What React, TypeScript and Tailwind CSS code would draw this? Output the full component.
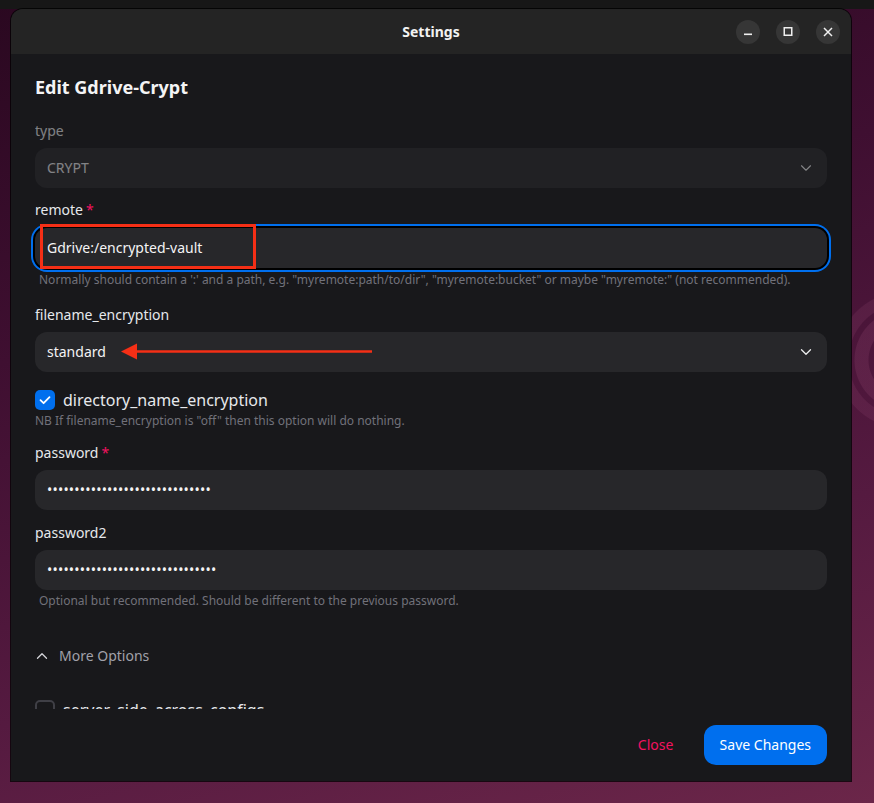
import React from "react";
import { ChevronDown, ChevronUp } from "lucide-react";

function Label({ children, required }: { children: React.ReactNode; required?: boolean }) {
  return (
    <div className="h-5 text-sm leading-5 text-[#e6e8ec]">
      {children}
      {required && <span className="ml-[3px] text-[#f31260]">*</span>}
    </div>
  );
}

function WinButton({ children }: { children: React.ReactNode }) {
  return (
    <div className="flex h-6 w-6 items-center justify-center rounded-full bg-[#363636] text-[#efefef]">
      {children}
    </div>
  );
}

export default function App() {
  const dots1 = "•".repeat(30);
  const dots2 = "•".repeat(31);
  return (
    <div className="relative flex h-[803px] w-[874px] flex-col overflow-hidden bg-[radial-gradient(circle_at_905px_360px,transparent_0_36px,rgba(130,60,100,0.3)_37px_50px,transparent_51px_56px,rgba(130,60,100,0.25)_57px_68px,transparent_69px),linear-gradient(165deg,#2a0820_0%,#3f0f31_35%,#551a40_70%,#6b2649_100%)] font-['Noto_Sans',sans-serif]">
      {/* top panel */}
      <div className="h-[9px] w-full bg-[#171717]" />

      <div className="flex pl-[11px]">
        {/* window */}
        <div className="flex h-[772px] w-[840px] flex-col overflow-hidden rounded-t-[12px] bg-[#18181b] shadow-[0_0_0_1px_rgba(0,0,0,0.75)]">
          {/* title bar */}
          <div className="grid h-[45px] shrink-0 grid-cols-[1fr_auto_1fr] items-center bg-[#242424]">
            <div />
            <div className="text-sm font-bold text-[#f2f2f2]">Settings</div>
            <div className="flex justify-end gap-4 pr-[11px]">
              <WinButton>
                <svg width="24" height="24" viewBox="0 0 24 24">
                  <rect x="8" y="13.5" width="8" height="1.6" fill="currentColor" />
                </svg>
              </WinButton>
              <WinButton>
                <svg width="24" height="24" viewBox="0 0 24 24">
                  <rect x="8.25" y="7.75" width="7.5" height="7.5" fill="none" stroke="currentColor" strokeWidth="1.5" />
                </svg>
              </WinButton>
              <WinButton>
                <svg width="24" height="24" viewBox="0 0 24 24">
                  <path d="M8 8 L16 16 M16 8 L8 16" stroke="currentColor" strokeWidth="1.5" />
                </svg>
              </WinButton>
            </div>
          </div>

          {/* scroll area */}
          <div className="h-[655px] shrink-0 overflow-hidden px-6">
            <div className="mt-[19px] text-lg font-bold leading-7 text-[#f4f4f5]">Edit Gdrive-Crypt</div>

            {/* type */}
            <div className="mt-5 flex flex-col gap-[7px] opacity-50">
              <Label>type</Label>
              <div className="flex h-10 items-center justify-between rounded-xl bg-[#2a2a2e] pl-3 pr-3 text-sm text-[#ecedee]">
                <span>CRYPT</span>
                <ChevronDown size={18} strokeWidth={1.5} />
              </div>
            </div>

            {/* remote */}
            <div className="mt-3 flex flex-col gap-2">
              <Label required>remote</Label>
              <div className="flex h-10 items-center rounded-xl bg-[#27272a] px-3 text-sm text-[#f4f4f5] ring-2 ring-[#006fee] ring-offset-2 ring-offset-black">
                Gdrive:/encrypted-vault
              </div>
            </div>
            <div className="px-1 py-1 text-xs leading-4 text-[#71717a]">
              Normally should contain a ':' and a path, e.g. "myremote:path/to/dir", "myremote:bucket" or maybe "myremote:" (not recommended).
            </div>

            {/* filename_encryption */}
            <div className="mt-[13px] flex flex-col gap-[7px]">
              <Label>filename_encryption</Label>
              <div className="flex h-10 items-center justify-between rounded-xl bg-[#27272a] px-3 text-sm text-[#f4f4f5]">
                <span>standard</span>
                <ChevronDown size={18} strokeWidth={1.75} className="text-[#ecedee]" />
              </div>
            </div>

            {/* directory_name_encryption */}
            <div className="mt-4 flex h-6 items-center gap-2">
              <div className="flex h-5 w-5 items-center justify-center rounded-[5px] bg-[#006fee]">
                <svg width="20" height="20" viewBox="0 0 20 20">
                  <polyline points="5.5,10.2 8.6,13.2 14.5,7.2" fill="none" stroke="white" strokeWidth="1.8" strokeLinecap="round" strokeLinejoin="round" />
                </svg>
              </div>
              <span className="text-base leading-6 text-[#e6e8ec]">directory_name_encryption</span>
            </div>
            <div className="mt-px text-xs leading-4 text-[#71717a]">
              NB If filename_encryption is "off" then this option will do nothing.
            </div>

            {/* password */}
            <div className="mt-[14px] flex flex-col gap-[7px]">
              <Label required>password</Label>
              <div className="flex h-10 items-center rounded-xl bg-[#27272a] px-3 text-sm tracking-[0.2px] text-[#f4f4f5]">
                {dots1}
              </div>
            </div>

            {/* password2 */}
            <div className="mt-[13px] flex flex-col gap-[7px]">
              <Label>password2</Label>
              <div className="flex h-10 items-center rounded-xl bg-[#27272a] px-3 text-sm tracking-[0.2px] text-[#f4f4f5]">
                {dots2}
              </div>
            </div>
            <div className="mt-[3px] px-1 text-xs leading-4 text-[#71717a]">
              Optional but recommended. Should be different to the previous password.
            </div>

            {/* More options */}
            <div className="mt-[37px] flex h-5 items-center gap-2 text-sm text-[#a1a1aa]">
              <ChevronUp size={18} strokeWidth={1.75} className="-ml-[2px] text-[#d4d4d8]" />
              <span>More Options</span>
            </div>

            <div className="mt-8 flex h-6 items-center gap-2">
              <div className="h-5 w-5 rounded-[5px] border-2 border-[#3f3f46]" />
              <span className="text-base leading-6 text-[#e6e8ec]">server_side_across_configs</span>
            </div>
          </div>

          {/* footer */}
          <div className="flex shrink-0 items-center justify-end gap-2 px-6 py-4">
            <div className="flex h-10 min-w-20 items-center justify-center rounded-xl px-4 text-sm text-[#f31260]">Close</div>
            <div className="flex h-10 items-center justify-center rounded-xl bg-[#006fee] px-4 text-sm text-white">Save Changes</div>
          </div>
        </div>
      </div>

      {/* annotations */}
      <div className="pointer-events-none absolute left-[40px] top-[224px] h-[45px] w-[216px] border-[3px] border-[#f52f16]" />
      <svg className="pointer-events-none absolute left-[118px] top-[341px]" width="260" height="22" viewBox="0 0 260 22">
        <line x1="16" y1="10.5" x2="254" y2="10.5" stroke="#f52f16" strokeWidth="2.5" />
        <polygon points="3,10.5 19,2.5 19,18.5" fill="#f52f16" />
      </svg>
    </div>
  );
}
